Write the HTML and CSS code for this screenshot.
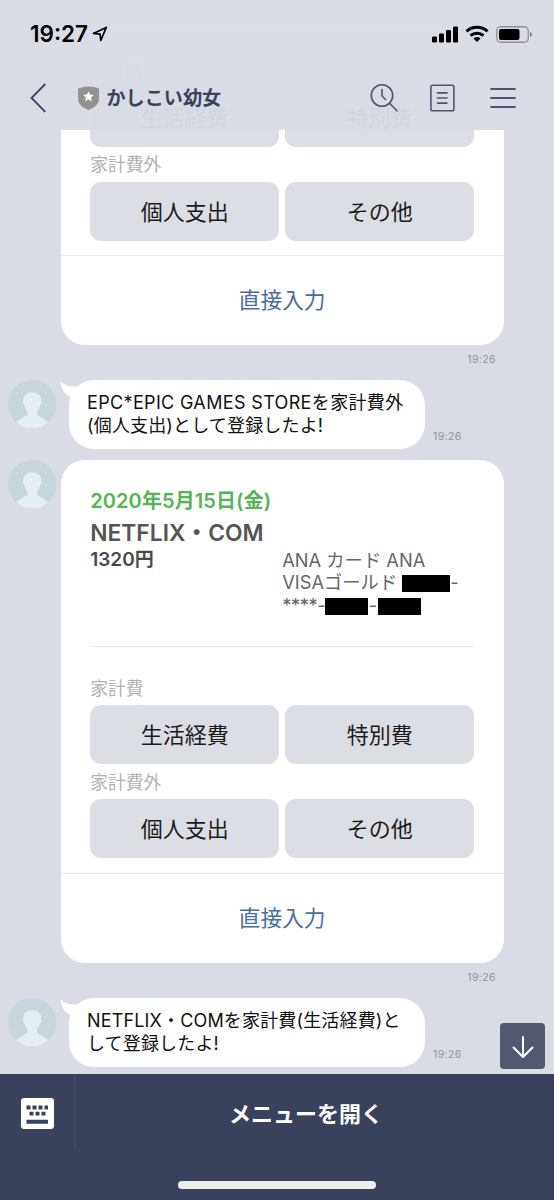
FILE: index.html
```html
<!DOCTYPE html>
<html lang="ja">
<head>
<meta charset="utf-8">
<title>かしこい幼女</title>
<link rel="stylesheet" href="styles.css">
</head>
<body>
<svg class="defs" width="0" height="0">
  <symbol id="person" viewBox="0 0 48 48">
    <circle cx="24" cy="24" r="24" fill="#c5d6dd"/>
    <path d="M24 12c-5.300 0-9 3.500-9 8.300 0 1-.4 1.400 0 3 .4 1.500 1.200 1.600 1.700 3 .7 2.500 2.300 4.200 2.600 5.600.4 2.500-1.300 3.300-3.200 4.300L8 41.900A24 24 0 0 0 40 41.900l-8.100-5.700c-1.900-1-3.600-1.800-3.200-4.300.3-1.400 1.900-3.100 2.600-5.600.5-1.400 1.300-1.500 1.700-3 .4-1.600 0-2 0-3C33 15.500 29.300 12 24 12z" fill="#e5eef1"/>
  </symbol>
  <symbol id="tail" viewBox="0 0 24 18">
    <path d="M.7 1C4.500 5.800 11 7.600 18.500 6L24 10 10.500 16.700C4.500 14.500.7 8.500.7 1z" fill="#fff"/>
  </symbol>
</svg>
<div class="screen">
  <main class="chat">
    <section class="message">
      <article class="card card-first">
        <div class="card-body">
          <hr class="rule">
          <p class="label">家計費</p>
          <div class="choices"><button class="choice">生活経費</button><button class="choice">特別費</button></div>
          <p class="label label-next">家計費外</p>
          <div class="choices"><button class="choice">個人支出</button><button class="choice">その他</button></div>
        </div>
        <a class="direct">直接入力</a>
      </article>
    </section>
    <time class="time time-below">19:26</time>
    <section class="message">
      <svg class="avatar"><use href="#person"/></svg>
      <div class="bubble"><svg class="tail"><use href="#tail"/></svg><p><span class="line-epic">EPC*EPIC GAMES STOREを家計費外</span><br>(個人支出)として登録したよ!</p></div>
      <time class="time time-side">19:26</time>
    </section>
    <section class="message message-card">
      <svg class="avatar"><use href="#person"/></svg>
      <article class="card">
        <div class="card-body">
          <p class="date">2020年5月15日(金)</p>
          <h2 class="shop">NETFLIX・COM</h2>
          <div class="payment">
            <p class="amount">1320円</p>
            <p class="method">ANA カード ANA<br>VISAゴールド <i class="mask mask-wide"></i>-<br><span class="stars">****-</span><i class="mask"></i><span class="dash">-</span><i class="mask"></i></p>
          </div>
          <hr class="rule">
          <p class="label">家計費</p>
          <div class="choices"><button class="choice">生活経費</button><button class="choice">特別費</button></div>
          <p class="label label-next">家計費外</p>
          <div class="choices"><button class="choice">個人支出</button><button class="choice">その他</button></div>
        </div>
        <a class="direct">直接入力</a>
      </article>
    </section>
    <time class="time time-below">19:26</time>
    <section class="message">
      <svg class="avatar"><use href="#person"/></svg>
      <div class="bubble"><svg class="tail"><use href="#tail"/></svg><p>NETFLIX・COMを家計費(生活経費)と<br>して登録したよ!</p></div>
      <time class="time time-side">19:26</time>
    </section>
    <button class="jump"><svg width="24" height="24" viewBox="0 0 24 24" fill="none" stroke="#fff" stroke-width="2" stroke-linecap="round" stroke-linejoin="round"><path d="M12 2v20M2.500 12.500 12 22l9.500-9.500"/></svg></button>
  </main>

  <header class="top">
    <div class="status">
      <span class="clock">19:27</span>
      <svg class="location" width="16" height="16" viewBox="0 0 16 16" fill="none" stroke="#000" stroke-width="1.700" stroke-linejoin="round"><path d="M14.300 1.400 1.400 7.400l6.700.8.700 6.300z"/></svg>
      <svg class="signal" width="26" height="17" viewBox="0 0 26 17"><rect x="0" y="10.500" width="5" height="6" rx="1.300"/><rect x="7" y="7.500" width="5" height="9" rx="1.300"/><rect x="14" y="4" width="5" height="12.500" rx="1.300"/><rect x="21" y="0.500" width="5" height="16" rx="1.300"/></svg>
      <svg class="wifi" width="24" height="18" viewBox="0 0 24 18" fill="none" stroke="#000" stroke-width="3"><path d="M1.500 6.300a15.500 15.500 0 0 1 21 0M5.500 10.700a9.600 9.600 0 0 1 13 0"/><path d="m12 17-3.500-3.600a5 5 0 0 1 7 0z" fill="#000" stroke="none"/></svg>
      <svg class="battery" width="37" height="17" viewBox="0 0 37 17"><rect x=".75" y=".75" width="31.500" height="15.500" rx="4" fill="none" stroke="#8e9096" stroke-width="1.300"/><rect x="3" y="3" width="20.500" height="11" rx="2" fill="#000"/><path d="M34 6c2.500.8 2.500 4.200 0 5z" fill="#777980"/></svg>
    </div>
    <nav class="nav">
      <svg class="back" width="17" height="30" viewBox="0 0 17 30" fill="none" stroke="#39425d" stroke-width="1.800"><path d="M15.300 1 1.500 15l13.800 13.800"/></svg>
      <svg class="shield" width="21" height="24" viewBox="0 0 21 24"><path d="M0 2.500Q10.500-1.500 21 2.500v10.500c0 5-4.500 8.500-10.500 11C4.500 21.500 0 18 0 13z" fill="#929292"/><path d="m10.500 5.200 1.600 3.400 3.700.4-2.700 2.600.7 3.700-3.300-1.800-3.300 1.800.7-3.700-2.700-2.600 3.700-.4z" fill="#fff"/></svg>
      <h1 class="name">かしこい幼女</h1>
      <svg class="search" width="28" height="29" viewBox="0 0 28 29" fill="none" stroke="#4b5572" stroke-width="1.600" stroke-linecap="round"><circle cx="12" cy="12.500" r="10.700"/><path d="m19.500 20.300 7.500 7.500M12 6.500v6.500l3.500 3.500"/></svg>
      <svg class="note" width="25" height="28" viewBox="0 0 25 28" fill="none" stroke="#4b5572" stroke-width="1.600" stroke-linecap="round"><rect x=".9" y="1.200" width="23" height="25.500" rx="1.800"/><path d="M7.500 8.900h9.500M7.500 14h9.500M7.500 19.100h9.500"/></svg>
      <svg class="menu" width="26" height="22" viewBox="0 0 26 22" stroke="#4b5572" stroke-width="1.800" stroke-linecap="round"><path d="M1 2h24M1 11h24M1 20h24"/></svg>
    </nav>
  </header>

  <footer class="bottom">
    <div class="keyboard"><svg width="33" height="31" viewBox="0 0 33 31"><rect width="33" height="31" rx="3" fill="#fff"/><path d="M5.500 7.500h4v4h-4zM11.500 7.500h4v4h-4zM17.500 7.500h4v4h-4zM23.500 7.500h3.500v4h-3.500zM8.500 13.700h4v3.800h-4zM14.500 13.700h4v3.800h-4zM20.500 13.700h4v3.800h-4zM5.500 21.700H27v4H5.500z" fill="#39425d"/></svg></div>
    <div class="open-menu">メニューを開く</div>
    <div class="home"></div>
  </footer>
</div>
</body>
</html>
```
FILE: styles.css
```css
* { box-sizing: border-box; }
body { margin: 0; font-family: Inter, "Noto Sans CJK JP", sans-serif; }
p, h1, h2 { margin: 0; }
button { border: 0; padding: 0; font: inherit; }
.defs { position: absolute; }
.screen { position: relative; width: 554px; height: 1200px; overflow: hidden; display: flex; flex-direction: column; background: #d9dce4; }

/* Conversation */
.chat { position: relative; height: 1074px; display: flex; flex-direction: column; justify-content: flex-end; padding: 0 0 7px 7.5px; }
.message { display: flex; flex: none; align-items: flex-start; }
.message-card { margin-top: 11px; }
.avatar { flex: none; width: 48.5px; height: 48.5px; }
.card { width: 443px; height: 502.5px; margin-left: 4.7px; border-radius: 24px; background: #fff; overflow: hidden; }
.card-first { height: 316.500px; margin-left: 53.2px; border-radius: 0 0 24px 24px; }
.card-body { height: 413px; padding: 29px 29.500px 0; }
.card-first .card-body { height: 227px; padding-top: 0; }
.date { height: 23px; font-size: 20px; line-height: 24px; font-weight: 600; letter-spacing: .1px; color: #55b455; white-space: nowrap; }
.shop { height: 27px; margin-top: 7px; font-size: 22.800px; line-height: 27px; font-weight: 600; color: #555; white-space: nowrap; }
.payment { display: grid; grid-template-columns: 1fr 1fr; height: 67px; margin-top: 2.500px; line-height: 22.900px; }
.amount { font-size: 19px; font-weight: 600; color: #494949; }
.method { font-size: 18.300px; color: #666; white-space: nowrap; }
.stars { letter-spacing: -.4px; }
.mask { display: inline-block; width: 43px; height: 17.500px; background: #000; vertical-align: -3px; }
.mask-wide { width: 48px; }
.dash { display: inline-block; width: 9.500px; text-align: center; }
.rule { height: 1px; margin: 30px 0 30px; border: 0; background: #e9eaec; }
.card-first .rule { margin-top: 0; }
.label { height: 22px; font-size: 17.800px; line-height: 24px; color: #b2b2b2; }
.label-next { margin-top: 6.500px; }
.choices { display: grid; grid-template-columns: 1fr 1fr; gap: 6px; height: 59px; margin-top: 6.500px; }
.choice { height: 59px; padding-top: 1px; border-radius: 11px; background: #dbdee5; color: #1b1b1b; font-size: 22px; line-height: 58px; }
.direct { display: block; height: 89.500px; border-top: 1px solid #e9eaec; color: #4d6ca1; font-size: 21.700px; line-height: 88px; text-align: center; }
.bubble { position: relative; width: 355.500px; height: 69.500px; margin-left: 13px; padding: 12.500px 18px; border-radius: 25px; background: #fff; color: #111; font-size: 18px; line-height: 22.700px; letter-spacing: .16px; white-space: nowrap; }
.line-epic { letter-spacing: .35px; }
.tail { position: absolute; left: -9px; top: 0; width: 24px; height: 18px; }
.time { color: #8f939c; font-size: 10.500px; line-height: 14px; letter-spacing: .4px; }
.time-below { flex: none; height: 35px; padding-top: 8.500px; padding-right: 58px; text-align: right; }
.time-side { margin: 50.200px 0 0 8.500px; }
.jump { position: absolute; left: 500px; top: 1023px; width: 45px; height: 46px; display: grid; place-items: center; padding-top: 1px; border-radius: 4px; background: #51586f; }

/* Translucent header above the conversation */
.top { position: absolute; inset: 0 0 auto; height: 130px; background: rgba(217, 220, 228, .965); }
.status { display: flex; align-items: center; height: 68px; padding: 0 21px 0 30px; }
.clock { width: 60px; font-size: 22.500px; font-weight: 600; line-height: 26px; white-space: nowrap; }
.location { margin-left: 2px; }
.signal { margin-left: auto; }
.wifi { margin-left: 7px; }
.battery { margin-left: 7px; }
.nav { display: flex; align-items: center; height: 59px; padding: 0 38.500px 0 30px; }
.shield { margin-left: 31px; }
.name { margin: 0 0 0 7.500px; font-size: 19.100px; line-height: 28px; font-weight: 600; color: #39425d; white-space: nowrap; }
.search { margin-left: auto; }
.note { margin-left: 32px; }
.menu { margin-left: 34.500px; }

/* Rich menu bar */
.bottom { display: grid; grid-template: 75px 1fr / 75px 1fr; height: 126px; background: #39425d; }
.keyboard { display: grid; place-items: center; border-right: 1px solid #464f6b; padding-top: 3px; }
.open-menu { padding-right: 17px; text-align: center; color: #fff; font-size: 22px; font-weight: 600; line-height: 80px; }
.home { grid-column: 1 / 3; justify-self: center; width: 198px; height: 8px; margin-top: 31.500px; border-radius: 4px; background: #eee; }
```
